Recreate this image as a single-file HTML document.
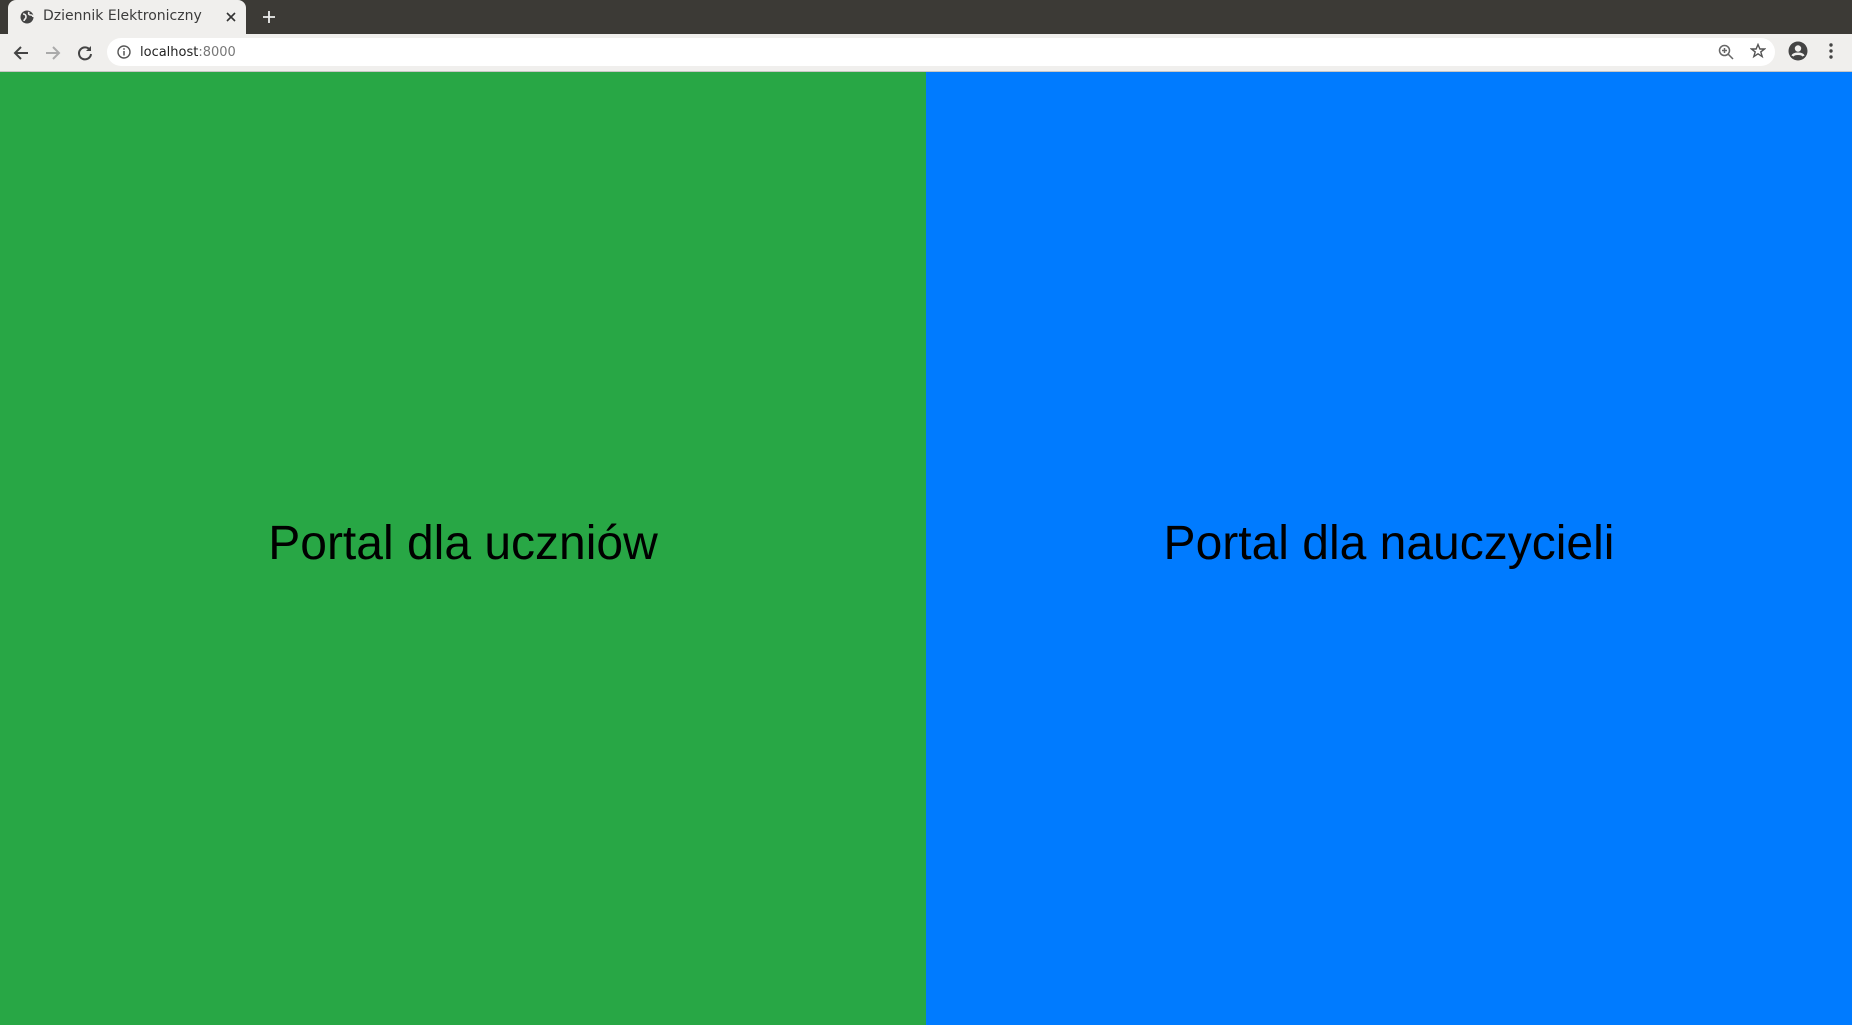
<!DOCTYPE html>
<html><head><meta charset="utf-8"><style>
body{margin:0;width:1852px;height:1025px;overflow:hidden;font-family:"Liberation Sans",sans-serif;position:relative;background:#fff}
.tabbar{position:absolute;left:0;top:0;width:1852px;height:34px;background:#3c3a36}
.tab{position:absolute;left:8px;top:0;width:238px;height:34px;background:#f0efed;border-radius:8px 8px 0 0}
.tab span{position:absolute;left:35px;top:8px;font-size:14px;color:#3c3c3c;font-family:"DejaVu Sans","Liberation Sans",sans-serif}
.toolbar{position:absolute;left:0;top:34px;width:1852px;height:37px;background:#f0efed;border-bottom:1px solid #c8c7c5}
.omni{position:absolute;left:107px;top:4px;width:1668px;height:28px;background:#fff;border-radius:14px}
.omni span{position:absolute;left:33px;top:7px;font-size:13px;color:#222;font-family:"DejaVu Sans","Liberation Sans",sans-serif}
.l{position:absolute;left:0;top:72px;width:926px;height:953px;background:#28a745}
.r{position:absolute;left:926px;top:72px;width:926px;height:953px;background:#007bff}
.t{position:absolute;top:520px;width:926px;text-align:center;font-size:48px;line-height:48px;color:#000}
</style></head><body>
<div class="tabbar">
 <div class="tab">
  <svg style="position:absolute;left:12px;top:10px" width="14" height="14" viewBox="0 0 14 14"><circle cx="7" cy="7" r="6.5" fill="#444"/><path d="M3 4c2 0 3 1 3 3s-2 2-2 4M9 2c-1 2 0 3 2 3s2 2 2 2" stroke="#f0efed" stroke-width="1.6" fill="none"/></svg>
  <span>Dziennik Elektroniczny</span>
  <svg style="position:absolute;left:218px;top:12px" width="10" height="10"><path d="M1 1L9 9M9 1L1 9" stroke="#333" stroke-width="1.6"/></svg>
 </div>
 <svg style="position:absolute;left:262px;top:10px" width="14" height="14"><path d="M7 1V13M1 7H13" stroke="#eee" stroke-width="1.8"/></svg>
</div>
<div class="toolbar">
 <svg style="position:absolute;left:12px;top:10px" width="18" height="18"><path d="M16 9H3M9 3L3 9L9 15" stroke="#444" stroke-width="2" fill="none"/></svg>
 <svg style="position:absolute;left:44px;top:10px" width="18" height="18"><path d="M2 9H15M9 3L15 9L9 15" stroke="#aaa" stroke-width="2" fill="none"/></svg>
 <svg style="position:absolute;left:76px;top:10px" width="18" height="18"><path d="M14 6A6 6 0 1 0 15 10" stroke="#444" stroke-width="2" fill="none"/><path d="M15 2V7H10Z" fill="#444"/></svg>
 <div class="omni">
  <svg style="position:absolute;left:10px;top:7px" width="14" height="14"><circle cx="7" cy="7" r="6" stroke="#555" stroke-width="1.4" fill="none"/><path d="M7 6V10.5" stroke="#555" stroke-width="1.5"/><circle cx="7" cy="4" r="0.9" fill="#555"/></svg>
  <span>localhost<span style="position:static;color:#777">:8000</span></span>
  <svg style="position:absolute;left:1611px;top:6px" width="16" height="16"><circle cx="6.5" cy="6.5" r="5" stroke="#666" stroke-width="1.5" fill="none"/><path d="M10 10L15 15M6.5 4V9M4 6.5H9" stroke="#666" stroke-width="1.5"/></svg>
  <svg style="position:absolute;left:1643px;top:5px" width="16" height="16"><path d="M8 1.5L9.9 6H14.5L10.8 8.9L12.2 13.6L8 10.8L3.8 13.6L5.2 8.9L1.5 6H6.1Z" stroke="#555" stroke-width="1.4" fill="none"/></svg>
 </div>
 <svg style="position:absolute;left:1788px;top:7px" width="20" height="20"><circle cx="10" cy="10" r="9.5" fill="#444"/><circle cx="10" cy="7.5" r="3.2" fill="#f0efed"/><path d="M4.5 15C6 12 14 12 15.5 15" stroke="#f0efed" stroke-width="2.5" fill="none"/></svg>
 <svg style="position:absolute;left:1828px;top:8px" width="6" height="18"><circle cx="3" cy="3" r="1.7" fill="#444"/><circle cx="3" cy="9" r="1.7" fill="#444"/><circle cx="3" cy="15" r="1.7" fill="#444"/></svg>
</div>
<div class="l"></div><div class="r"></div>
<div class="t" style="left:0">Portal dla uczniów</div>
<div class="t" style="left:926px">Portal dla nauczycieli</div>
</body></html>
